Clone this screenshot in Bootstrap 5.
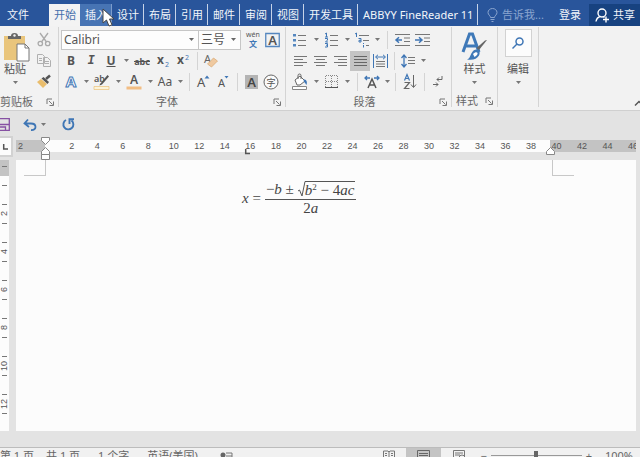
<!DOCTYPE html>
<html lang="zh-CN">
<head>
<meta charset="utf-8">
<meta name="viewport" content="width=device-width, initial-scale=1">
<title>Word</title>
<link href="https://cdn.jsdelivr.net/npm/bootstrap@5.3.0/dist/css/bootstrap.min.css" rel="stylesheet">
<style>
:root{--blue:#29559b;--ink:#555;--accent:#3f76b5;--line:#d4d4d4}
body{font:11px/16px "Noto Sans","Noto Sans CJK SC",sans-serif;color:var(--ink);background:#e3e3e3}
button{border:0;padding:0;background:none;color:inherit;font:inherit}
svg{display:block;flex:none;overflow:visible}
.tabs{height:26px;background:var(--blue);color:#f2f5fa}
.tabs a,.tabs button{color:inherit;text-decoration:none;white-space:nowrap;flex:none}
.tab-item{display:flex;align-items:center;height:21px;padding:0 4px 0 5px;margin-top:4px;border-right:1px solid #c6d3e8}
.tab-item.chosen{background:#f3f3f3;color:#4470ad!important;height:22px;border:0}
.tab-item.hovered{background:#4774b4;height:22px;border-right-color:#7d9ccb}
.tab-item.addin{width:120px;padding-right:0}
.tab-file{padding:0 20px 0 7px}
.hint{color:#8aa5cf!important;width:70px;padding-left:9px}
.share{background:#174280;width:51px;padding-left:6px;height:22px;margin-top:4px}
.pointer-mark{position:absolute;left:102px;top:8px;z-index:3}
.ribbon{background:#f2f2f2;height:85px;border-bottom:1px solid #d0d0d0}
.group{padding:2px 0 0;border-right:1px solid var(--line);margin:1px 0 3px;flex:none}
.g-clip{width:59px}.g-font{width:227px;padding-left:2px}.g-para{width:166px;padding-left:4px}.g-style{width:46px}.g-edit{width:41px}
.tool-row{display:flex;height:21px;align-items:center}
.tool-row button{display:flex;align-items:center;justify-content:center;height:20px;flex:none;font-size:12px}
.s4{width:4px}.s6{width:6px}.s8{width:8px}.s10{width:10px}.s12{width:12px}.s20{width:20px}.s22{width:22px}.s24{width:24px}
.split{display:flex;justify-content:center;height:18px;flex:none}
.split::before{content:"";width:1px;background:var(--line)}
.group-label{display:flex;align-items:center;justify-content:center;height:20px;margin-bottom:-4px;flex:none;color:#666}
.caret-ico{width:5px;height:3px;fill:#777}
.pressed{background:#c4c4c4}
.pick{appearance:none;border:1px solid #c6c6c6;border-radius:0;height:20px;color:#555;font:12px "Noto Sans","Noto Sans CJK SC",sans-serif;padding:0 2px;background:#fdfdfd url("data:image/svg+xml,%3Csvg xmlns='http://www.w3.org/2000/svg' viewBox='0 0 5 3'%3E%3Cpath d='M0 0h5L2.5 3z' fill='%23666'/%3E%3C/svg%3E") no-repeat right 4px center/5px 3px}
.pick-font{width:138px}.pick-size{width:43px;margin-left:-1px}
.big{display:flex;flex-direction:column;align-items:center}
.paste{gap:4px}
.paste span{margin-top:-4px}
.finder{width:27px;height:28px;border:1px solid #d2d2d2;background:#fcfcfc}
.quick{height:25px;padding-top:2px}
.ruler-band{height:24px}
.corner{width:16px;padding:0 3px 3px 0}
.corner button{width:100%;height:21px;background:#fcfcfc;border:solid #d2d2d2;border-width:2px 2px 2px 0}
.ruler{height:12px;margin:4px 4px 0 0;background:#fcfcfc;position:relative}
.ruler-scale{overflow:hidden;font:9px/12px "Liberation Sans",sans-serif;color:#555}
.edge-left{width:29px;background:#c3c3c3;padding-left:2px;flex:none}
.edge-right{position:absolute;right:0;top:0;width:86px;height:12px;background:#c3c3c3}
.numbers{display:flex;flex:1;margin:0 -10px 0 14px;position:relative}
.numbers span{flex:1 0 0;text-align:center}
.stop{position:absolute}
.paper{background:#fcfcfc;margin-right:4px;padding-top:20px}
.v-ruler{width:9px;background:#fcfcfc;font:9px/9px "Liberation Sans",sans-serif;margin-right:7px;flex:none;overflow:hidden}
.v-top{height:6px;background:#c3c3c3}
.v-ruler span{display:flex;height:19px;width:9px;align-items:center;justify-content:center;writing-mode:vertical-rl;transform:rotate(180deg);background:linear-gradient(#777,#777) no-repeat 2px bottom/5px 1px}
.v-ruler .v-margin{background-color:#c3c3c3;height:10px}
.v-ruler .v-first{height:9px;background:none}
.crop-l{position:absolute;left:8px;top:0;width:22px;height:16px;border:solid #c8c8c8;border-width:0 1px 1px 0}
.crop-r{position:absolute;right:62px;top:0;width:22px;height:16px;border:solid #c8c8c8;border-width:0 0 1px 1px}
.equation{font:italic 15px/16px "Liberation Serif",serif;color:#444;margin-left:226px}
.fraction{text-align:center}
.numer{border-bottom:1px solid #555;padding:1px 1px 2px 1px;height:20px}
.radicand{border-top:1px solid #555;padding-right:1px;line-height:16px}
.equation sup{font-size:9px;font-style:normal;top:-5px;line-height:0}
.upright{font-style:normal}
.below{height:16px}
.status{height:24px;margin-bottom:-14px;background:#f1f1f1;border-top:1px solid #bcbcbc;white-space:nowrap;color:#666;padding-right:7px}
.status button{height:22px}
.words{margin-left:18px}.lang{margin-left:18px;margin-right:18px}
.zoom-range{appearance:none;width:91px;height:16px;background:linear-gradient(#999,#999) no-repeat 0 7px/100% 1px}
.zoom-range::-webkit-slider-thumb{appearance:none;width:4px;height:10px;background:#666}
.zoom-value{margin-left:13px}
.view-btn{width:35px;display:flex;justify-content:center;padding-top:2px}
</style>
<script src="https://cdn.jsdelivr.net/npm/bootstrap@5.3.0/dist/js/bootstrap.bundle.min.js"></script>
</head>
<body>
<svg width="0" height="0" class="position-absolute" aria-hidden="true">
<symbol id="caret" viewBox="0 0 5 3"><path d="M0 0h5L2.5 3z"/></symbol>
<symbol id="launch" viewBox="0 0 8 8"><path d="M1 6V1h5M3 3l3.500 3.500M7.500 3.500v4h-4" fill="none" stroke="#777"/></symbol>
</svg>
<div class="d-flex flex-column vh-100 overflow-hidden position-relative">
<nav class="tabs d-flex align-items-start flex-shrink-0" aria-label="功能区">
  <a href="#" class="tab-file align-self-center pt-1">文件</a>
  <a href="#" class="tab-item chosen">开始</a>
  <a href="#" class="tab-item hovered">插入</a>
  <a href="#" class="tab-item">设计</a>
  <a href="#" class="tab-item">布局</a>
  <a href="#" class="tab-item">引用</a>
  <a href="#" class="tab-item">邮件</a>
  <a href="#" class="tab-item">审阅</a>
  <a href="#" class="tab-item">视图</a>
  <a href="#" class="tab-item">开发工具</a>
  <a href="#" class="tab-item addin">ABBYY FineReader 11</a>
  <button class="hint d-flex align-items-center gap-1 align-self-center pt-1"><svg width="11" height="14" viewBox="0 0 11 14" fill="none" stroke="currentColor"><path d="M3.500 9.500C3.500 7.500 1 7 1 4.500a4.500 4 0 0 1 9 0C10 7 7.500 7.500 7.500 9.500zM3.500 11.500h4M4.500 13.500h2"/></svg>告诉我...</button>
  <a href="#" class="align-self-center pt-1 ms-auto me-2">登录</a>
  <button class="share d-flex align-items-center gap-1"><svg width="14" height="14" viewBox="0 0 14 14" fill="none" stroke="#fff" stroke-width="1.400"><circle cx="7" cy="5" r="4"/><path d="M1 13.500c.5-3 2-4.500 4.500-5M8 8.500l1.500 1M8 11.500h6M11 8.500v6"/></svg>共享</button>
</nav>
<svg class="pointer-mark" width="14" height="20" viewBox="0 0 14 20"><path d="M1 1v14l3.500-3 2.500 6 3-1.200-2.500-5.800H12z" fill="#fff" stroke="#444"/></svg>

<div class="ribbon d-flex flex-shrink-0">
  <section class="group g-clip">
    <div class="d-flex">
      <button class="big paste"><svg class="mt-1" width="30" height="28" viewBox="0 0 30 28"><path d="M4 3h21v24H4z" fill="#e9c57c"/><path d="M8 6V3h3a3.500 3 0 0 1 7 0h3v3z" fill="#666"/><circle cx="14.500" cy="2.500" r="1.200" fill="#f2f2f2"/><path d="M17 11h8l4 4v13H17z" fill="#fff" stroke="#777"/><path d="M25 11v4h4" fill="none" stroke="#777"/></svg><span>粘贴</span><svg class="caret-ico"><use href="#caret"/></svg></button>
      <div class="d-flex flex-column ms-1">
        <div class="tool-row"><button class="s20" aria-label="剪切"><svg width="14" height="15" viewBox="0 0 14 15" fill="none" stroke="#aaa" stroke-width="1.300"><path d="M3 1l6.500 9M11 1L4.500 10"/><circle cx="3.300" cy="11.500" r="2.200"/><circle cx="10.700" cy="11.500" r="2.200"/></svg></button></div>
        <div class="tool-row"><button class="s20" aria-label="复制"><svg width="14" height="13" viewBox="0 0 14 13" fill="#f2f2f2" stroke="#b0b0b0"><path d="M.5.500h5l2 2v7h-7zM6.500 3.500h4l3 3v6h-7z"/><path d="M2 4.500h3M2 6.500h3M8 7.500h4M8 9.500h4"/></svg></button></div>
        <div class="tool-row"><button class="s20" aria-label="格式刷"><svg width="14" height="13" viewBox="0 0 14 13"><path d="M0 7l4-3 6 5-4 4z" fill="#e9bd6d"/><path d="M4.500 3.500l2-1.500 5.500 5-1.500 2z" fill="#555"/><path d="M9 4l4-3.500" stroke="#555" stroke-width="2.500"/></svg></button></div>
      </div>
    </div>
    <div class="group-label justify-content-between ps-0 pe-1">剪贴板<button aria-label="剪贴板选项"><svg width="8" height="8"><use href="#launch"/></svg></button></div>
  </section>

  <section class="group g-font">
    <div class="tool-row">
      <select class="pick pick-font" aria-label="字体"><option>Calibri</option></select><select class="pick pick-size" aria-label="字号"><option>三号</option></select>
      <button class="s24" aria-label="拼音指南"><svg width="16" height="17" viewBox="0 0 16 17"><text x="8" y="6" text-anchor="middle" font-size="7" fill="#555">wén</text><text x="8" y="15.500" text-anchor="middle" font-size="8" font-weight="700" fill="#3f76b5">文</text></svg></button>
      <button aria-label="字符边框"><svg width="16" height="16" viewBox="0 0 16 16"><path d="M.75 1.500h13.500v13H.75z" fill="none" stroke="#5587bf" stroke-width="1.300"/><text x="7.500" y="13" text-anchor="middle" font-size="13" font-weight="600" fill="#555">A</text></svg></button>
    </div>
    <div class="tool-row">
      <button class="s20 fw-bold">B</button><button class="s20 fst-italic fw-bold font-monospace">I</button><button class="s20 fw-bold text-decoration-underline">U</button><button class="s10" aria-label="下划线选项"><svg class="caret-ico"><use href="#caret"/></svg></button>
      <button class="s22" aria-label="删除线"><svg width="16" height="12" viewBox="0 0 16 12"><text x="8" y="9.500" text-anchor="middle" font-size="9" font-weight="700" fill="#555">abc</text><path d="M0 6.500h16" stroke="#555"/></svg></button>
      <button class="s20" aria-label="下标"><svg width="14" height="12" viewBox="0 0 14 12"><text x="1" y="9" font-size="12" font-weight="700" fill="#555">x</text><text x="9" y="12" font-size="7" fill="#3f76b5">2</text></svg></button>
      <button class="s20" aria-label="上标"><svg width="14" height="12" viewBox="0 0 14 12"><text x="1" y="9" font-size="12" font-weight="700" fill="#555">x</text><text x="9" y="5" font-size="7" fill="#3f76b5">2</text></svg></button>
      <span class="split s8"></span>
      <button class="s20" aria-label="清除格式"><svg width="14" height="14" viewBox="0 0 14 14"><text x="0" y="9" font-size="11" fill="#666">A</text><path d="M3.500 10l6-6 4 3-6 6z" fill="#efc9a0" stroke="#d9a66e" stroke-width=".7"/></svg></button>
    </div>
    <div class="tool-row">
      <button class="s20" aria-label="文本效果"><svg width="16" height="16" viewBox="0 0 16 16"><text x="8" y="13" text-anchor="middle" font-size="15" font-weight="700" fill="#fff" stroke="#3f76b5">A</text></svg></button><button class="s10" aria-label="文本效果选项"><svg class="caret-ico"><use href="#caret"/></svg></button>
      <button class="s22" aria-label="突出显示"><svg width="16" height="16" viewBox="0 0 16 16"><text x="0" y="8" font-size="9" font-weight="600" fill="#555">ab</text><path d="M6 10l7.500-9 1.500 1.500-7 8-2.500 1z" fill="#555"/><path d="M0 12.500h15v3H0z" fill="#fbf3d9" stroke="#ecc27a" stroke-width=".7"/></svg></button><button class="s10" aria-label="突出显示选项"><svg class="caret-ico"><use href="#caret"/></svg></button>
      <button class="s22" aria-label="字体颜色"><svg width="16" height="16" viewBox="0 0 16 16"><text x="8" y="10" text-anchor="middle" font-size="12" font-weight="600" fill="#555">A</text><path d="M.5 12.500h15v3H.5z" fill="#f2bd83"/></svg></button><button class="s10" aria-label="字体颜色选项"><svg class="caret-ico"><use href="#caret"/></svg></button>
      <button class="s20">Aa</button><button class="s10" aria-label="大小写选项"><svg class="caret-ico"><use href="#caret"/></svg></button>
      <span class="split s8"></span>
      <button class="s20" aria-label="增大字号"><svg width="14" height="14" viewBox="0 0 14 14"><text x="1" y="12" font-size="13" fill="#555">A</text><path d="M8.500 3.500h5L11 .5z" fill="#3f76b5"/></svg></button>
      <button class="s20" aria-label="减小字号"><svg width="14" height="14" viewBox="0 0 14 14"><text x="2" y="12" font-size="11" fill="#555">A</text><path d="M8.500 1h4L10.500 3.500z" fill="#3f76b5"/></svg></button>
      <span class="split s8"></span>
      <button class="s20" aria-label="字符底纹"><svg width="13" height="14" viewBox="0 0 13 14"><path d="M0 0h13v14H0z" fill="#b4b4b4"/><text x="6.500" y="11.500" text-anchor="middle" font-size="13" font-weight="600" fill="#444">A</text></svg></button>
      <button class="s20" aria-label="带圈字符"><svg width="16" height="16" viewBox="0 0 16 16"><circle cx="8" cy="8" r="7" fill="#fafafa" stroke="#666"/><text x="8" y="11.500" text-anchor="middle" font-size="9" fill="#555">字</text></svg></button>
    </div>
    <div class="group-label pe-1"><span class="ms-auto">字体</span><button class="ms-auto" aria-label="字体选项"><svg width="8" height="8"><use href="#launch"/></svg></button></div>
  </section>

  <section class="group g-para">
    <div class="tool-row">
      <button class="s20" aria-label="项目符号"><svg width="14" height="14" viewBox="0 0 14 14"><path d="M0 1h3v2.500H0zM0 6h3v2.500H0zM0 11h3v2.500H0z" fill="#5587bf"/><path d="M5 2.500h8M5 7.500h8M5 12.500h8" stroke="#777"/></svg></button><button class="s12" aria-label="项目符号选项"><svg class="caret-ico"><use href="#caret"/></svg></button>
      <button class="s20" aria-label="编号"><svg width="14" height="14" viewBox="0 0 14 14"><path d="M0 1l1.500-1v4M0 4h3M0 5.500h2.500v1.500L.5 9H3M0 10.500h2.500v3.500H0M1 12.200h1.500" fill="none" stroke="#3f76b5"/><path d="M5 2.500h8M5 7.500h8M5 12.500h8" stroke="#777"/></svg></button><button class="s10" aria-label="编号选项"><svg class="caret-ico"><use href="#caret"/></svg></button>
      <button class="s20" aria-label="多级列表"><svg width="14" height="14" viewBox="0 0 14 14"><path d="M0 1l1.500-1v4M3.500 5.500H6v3.500H4V7.300h2M8.500 10v1M8.500 12v2.500" fill="none" stroke="#3f76b5"/><path d="M4 2.500h10M8 7.500h6M11 12.500h3" stroke="#777"/></svg></button><button class="s10" aria-label="多级列表选项"><svg class="caret-ico"><use href="#caret"/></svg></button>
      <span class="split s10"></span>
      <button class="s20" aria-label="减少缩进"><svg width="15" height="12" viewBox="0 0 15 12"><path d="M0 .5h15M9 4h6M9 7.500h6M0 11.500h15" stroke="#777"/><path d="M7 6H2M4 3.200L1 6l3 2.800" stroke="#3f76b5" stroke-width="1.500" fill="none"/></svg></button>
      <button class="s20" aria-label="增加缩进"><svg width="15" height="12" viewBox="0 0 15 12"><path d="M0 .5h15M9 4h6M9 7.500h6M0 11.500h15" stroke="#777"/><path d="M0 6h6M4 3.200L7 6 4 8.800" stroke="#3f76b5" stroke-width="1.500" fill="none"/></svg></button>
    </div>
    <div class="tool-row">
      <button class="s20" aria-label="左对齐"><svg width="13" height="10" viewBox="0 0 13 10"><path d="M0 .5h13M0 3.500h9M0 6.500h13M0 9.500h9" stroke="#777"/></svg></button><button class="s20" aria-label="居中"><svg width="13" height="10" viewBox="0 0 13 10"><path d="M0 .5h13M2 3.500h9M0 6.500h13M2 9.500h9" stroke="#777"/></svg></button><button class="s20" aria-label="右对齐"><svg width="13" height="10" viewBox="0 0 13 10"><path d="M0 .5h13M4 3.500h9M0 6.500h13M4 9.500h9" stroke="#777"/></svg></button><button class="s20 pressed" aria-label="两端对齐"><svg width="13" height="10" viewBox="0 0 13 10"><path d="M0 .5h13M0 3.500h13M0 6.500h13M0 9.500h13" stroke="#666"/></svg></button><button class="s20" aria-label="分散对齐"><svg width="15" height="14" viewBox="0 0 15 14"><path d="M.5 0v14M14.500 0v14M3 3h9M5 .8L2.500 3 5 5.200M10 .8L12.500 3 10 5.200" stroke="#3f76b5" fill="none"/><path d="M3 7.500h9M3 10h9M3 12.500h9" stroke="#777"/></svg></button>
      <span class="split s8"></span>
      <button class="s20" aria-label="行距"><svg width="14" height="14" viewBox="0 0 14 14"><path d="M3 1v12M.5 4L3 1l2.500 3M.5 10L3 13l2.500-3" stroke="#3f76b5" fill="none" stroke-width="1.300"/><path d="M7 3.500h7M7 6.500h7M7 9.500h7" stroke="#777"/></svg></button><button class="s10" aria-label="行距选项"><svg class="caret-ico"><use href="#caret"/></svg></button>
    </div>
    <div class="tool-row">
      <button class="s20" aria-label="底纹"><svg width="16" height="16" viewBox="0 0 16 16"><path d="M3 6l5-4 5 5-5 4H5z" fill="#fff" stroke="#666"/><path d="M6 5V1.500a1.500 1.500 0 0 1 3 0V5" fill="none" stroke="#666"/><path d="M11.500 5.500c3 0 4 2 3 5.500-1-1-1-2-2.500-3z" fill="#3f76b5"/><path d="M.5 12.500h14v3H.5z" fill="#fff" stroke="#888"/></svg></button><button class="s12" aria-label="底纹选项"><svg class="caret-ico"><use href="#caret"/></svg></button>
      <button class="s20" aria-label="边框"><svg width="14" height="13" viewBox="0 0 14 13" fill="none"><path d="M.5 12V.5h12V12M6.500 1v11M1 6.500h12" stroke="#888" stroke-dasharray="1 1"/><path d="M0 12.500h13" stroke="#555"/></svg></button><button class="s10" aria-label="边框选项"><svg class="caret-ico"><use href="#caret"/></svg></button>
      <span class="split s10"></span>
      <button class="s20" aria-label="中文版式"><svg width="16" height="14" viewBox="0 0 16 14"><path d="M4 13l4-9 4 9M5.500 10h5" fill="none" stroke="#555" stroke-width="1.500"/><path d="M1 3h5M3 1L1 3l2 2M10 3h5M13 1l2 2-2 2" fill="none" stroke="#3f76b5" stroke-width="1.300"/></svg></button><button class="s10" aria-label="中文版式选项"><svg class="caret-ico"><use href="#caret"/></svg></button>
      <span class="split s6"></span>
      <button class="s24" aria-label="排序"><svg width="13" height="15" viewBox="0 0 13 15"><path d="M.5 6.500L3 .5l2.500 6M1.300 4.500h3.400" fill="none" stroke="#3f76b5" stroke-width="1.200"/><path d="M.5 8.500h5l-5 6h5" fill="none" stroke="#666" stroke-width="1.200"/><path d="M9.500 1v12M7 10.500l2.500 3 2.500-3" fill="none" stroke="#666"/></svg></button>
      <span class="split s4"></span>
      <button class="s24" aria-label="显示编辑标记"><svg width="10" height="12" viewBox="0 0 10 12" fill="none" stroke="#666"><path d="M9 0v3.500H4M6 1.500l-2 2 2 2M0 8.500h5M3 6.500l2 2-2 2"/></svg></button>
    </div>
    <div class="group-label pe-1"><span class="ms-auto">段落</span><button class="ms-auto" aria-label="段落选项"><svg width="8" height="8"><use href="#launch"/></svg></button></div>
  </section>

  <section class="group g-style d-flex flex-column">
    <button class="big flex-grow-1 pt-1"><svg width="25" height="28" viewBox="0 0 25 28"><path d="M1 19L7.500 1h3L17 19M4 13h10" fill="none" stroke="#3f79b8" stroke-width="3"/><path d="M25 7l-8 10-2.500-2L23 7.500z" fill="#666"/><path d="M14.500 16.500c3 .5 4 3 2.500 6-2 3.500-6 5-12 4 3-1 3-4 5-7 1-2 2.500-3 4.500-3z" fill="#3f79b8"/><path d="M11 21c2-2 4-2 4.500-1s-1 3-3 4z" fill="#fff"/></svg><span>样式</span><svg class="caret-ico mt-1"><use href="#caret"/></svg></button>
    <div class="group-label justify-content-between ps-1 pe-1">样式<button aria-label="样式选项"><svg width="8" height="8"><use href="#launch"/></svg></button></div>
  </section>
  <section class="group g-edit">
    <button class="big w-100"><span class="finder d-flex align-items-center justify-content-center"><svg width="12" height="12" viewBox="0 0 12 12" fill="none" stroke="#3f76b5" stroke-width="1.500"><circle cx="7.500" cy="4.500" r="3.500"/><path d="M5 7L.5 11.500"/></svg></span><span class="mt-1">编辑</span><svg class="caret-ico mt-1"><use href="#caret"/></svg></button>
  </section>
  <button class="ms-auto align-self-end pb-1" aria-label="折叠功能区"><svg width="5" height="5" viewBox="0 0 5 5" fill="none" stroke="#555" stroke-width="1.500"><path d="M0 4.500l4-4 3 3"/></svg></button>
</div>

<div class="quick d-flex align-items-center flex-shrink-0 overflow-hidden">
  <button aria-label="保存"><svg width="23" height="13" viewBox="0 0 23 13" fill="none" stroke="#8651a3" stroke-width="1.300"><path d="M0 .7h9.300v11.600H0M0 6.500h9M0 9h5.500v3"/></svg></button>
  <button aria-label="撤销"><svg width="14" height="12" viewBox="0 0 14 12" fill="none" stroke="#3f76b5" stroke-width="1.800"><path d="M5 .5L1.500 4.500 6 8M2 4.500h6c6 0 6 7 0 6.500"/></svg></button>
  <button class="px-1" aria-label="撤销选项"><svg class="caret-ico"><use href="#caret"/></svg></button>
  <button class="ms-2 ps-1" aria-label="重复"><svg width="13" height="13" viewBox="0 0 13 13" fill="none" stroke="#3f76b5" stroke-width="1.900"><path d="M4 2a5 5 0 1 0 5.500.5M12 1.200H7.500V6"/></svg></button>
</div>

<div class="ruler-band d-flex flex-shrink-0">
  <div class="corner flex-shrink-0"><button class="d-flex align-items-center justify-content-center" aria-label="制表符"><svg width="5" height="6" viewBox="0 0 5 6" fill="none" stroke="#555" stroke-width="1.500"><path d="M.7 0v5H5"/></svg></button></div>
  <div class="ruler flex-grow-1">
    <div class="ruler-scale d-flex">
      <span class="edge-left">2</span><span class="edge-right"></span>
      <div class="numbers"><span>2</span><span>4</span><span>6</span><span>8</span><span>10</span><span>12</span><span>14</span><span>16</span><span>18</span><span>20</span><span>22</span><span>24</span><span>26</span><span>28</span><span>30</span><span>32</span><span>34</span><span>36</span><span>38</span><span>40</span><span>42</span><span>44</span><span>46</span></div>
    </div>
    <svg class="stop" style="left:25px;top:-3px" width="9" height="23" viewBox="0 0 9 23" fill="#fff" stroke="#888"><path d="M.5.500h8v3l-4 4-4-4zM4.500 10.500l4 4v3h-8v-3zM.500 17.500h8v5h-8z"/></svg>
    <svg class="stop" style="left:229px;top:9px" width="5" height="6" viewBox="0 0 5 6" fill="none" stroke="#555" stroke-width="1.500"><path d="M.7 0v4.500H5"/></svg>
    <svg class="stop" style="right:81px;top:7px" width="9" height="8" viewBox="0 0 9 8" fill="#fff" stroke="#888"><path d="M4.500.500l4 4v3h-8v-3z"/></svg>
  </div>
</div>

<main class="d-flex flex-grow-1 overflow-hidden">
  <div class="v-ruler"><div class="v-top"></div><span class="v-margin"></span><span class="v-first"></span><span></span><span>2</span><span></span><span>4</span><span></span><span>6</span><span></span><span>8</span><span></span><span>10</span><span></span><span>12</span><span></span></div>
  <article class="paper flex-grow-1 position-relative">
    <i class="crop-l"></i><i class="crop-r"></i>
    <div class="equation d-flex align-items-center gap-1">
      <span>x <span class="upright">=</span></span>
      <div class="fraction">
        <div class="numer d-flex"><span><span class="upright">−</span>b <span class="upright">±</span></span><svg class="ms-1" width="7" height="16" viewBox="0 0 7 16" fill="none" stroke="#555"><path d="M0 10l1.500-1L4 15 7 .5"/></svg><span class="radicand">b<sup>2</sup> <span class="upright">− 4</span>ac</span></div>
        <div><span class="upright">2</span>a</div>
      </div>
    </div>
  </article>
</main>
<div class="below flex-shrink-0"></div>
<footer class="status d-flex flex-shrink-0 align-items-start">
  <span>第 1 页</span><span class="ms-2 ps-1">共 1 页</span><span class="words">1 个字</span><span class="lang">英语(美国)</span>
  <button class="ms-1 d-flex pt-1" aria-label="宏"><svg width="13" height="12" viewBox="0 0 13 12"><circle cx="3" cy="3" r="2.500" fill="#666"/><path d="M6 1h6v9H2V7M6 4h6" fill="none" stroke="#777"/></svg></button>
  <button class="view-btn ms-auto" aria-label="阅读视图"><svg width="12" height="12" viewBox="0 0 12 12" fill="none" stroke="#777"><path d="M.5 1H5l1 1 1-1h4.500v9H.500zM6 2v9M2 3.500h2M2 5.500h2M8 3.500h2M8 5.500h2"/></svg></button>
  <button class="view-btn pressed" aria-label="页面视图"><svg width="13" height="12" viewBox="0 0 13 12" fill="none" stroke="#666"><path d="M.5.500h12v13H.500zM2 3.500h9M2 5.500h9M2 7.500h9"/></svg></button>
  <button class="view-btn" aria-label="Web 视图"><svg width="12" height="12" viewBox="0 0 12 12" fill="none" stroke="#777"><path d="M11.500 6V.5H.500v11H6M2 3h8M2 5h5"/><circle cx="9" cy="8" r="3"/></svg></button>
  <span class="ms-1">−</span><input class="zoom-range mx-1" type="range" min="0" max="200" value="100" aria-label="缩放"><span>+</span><button class="zoom-value h-auto">100%</button>
</footer>
</div>
</body>
</html>
